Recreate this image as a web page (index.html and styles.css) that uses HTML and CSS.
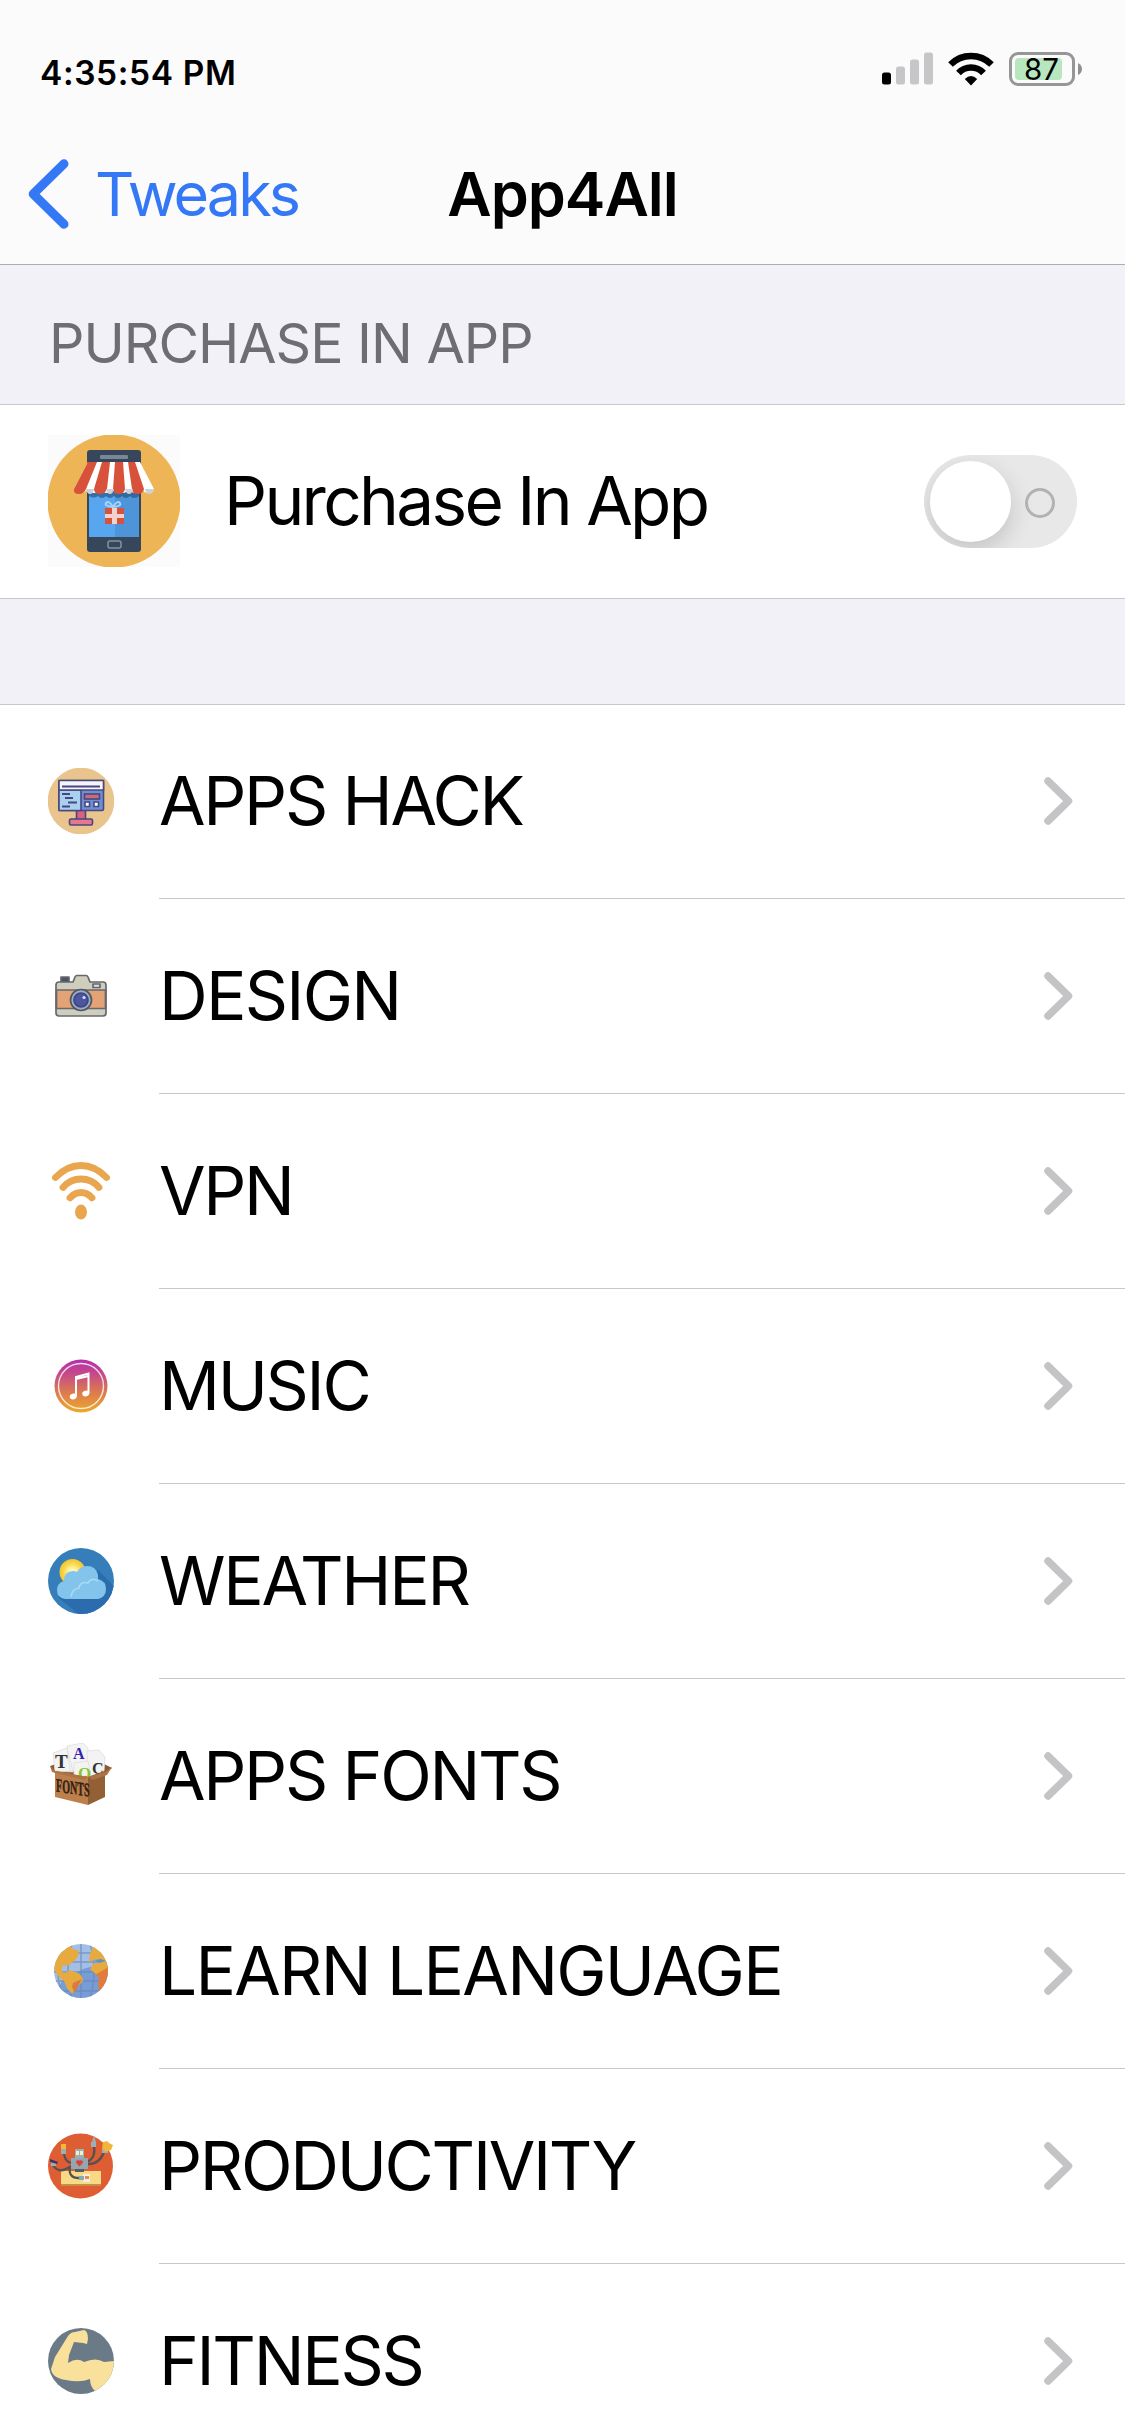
FILE: index.html
```
<!DOCTYPE html>
<html lang="en">
<head>
<meta charset="utf-8">
<title>App4All</title>
<link rel="stylesheet" href="styles.css">
</head>
<body>
<svg class="defs" width="0" height="0" aria-hidden="true">
  <defs>
    <symbol id="chevron" viewBox="0 0 30 48"><path d="M4 4 24.500 24 4 44" fill="none" stroke="#c4c4c6" stroke-width="7.500" stroke-linecap="round" stroke-linejoin="round"/></symbol>
    <linearGradient id="musicFill" x1="0" y1="0" x2="0" y2="1"><stop offset="0" stop-color="#b52fae"/><stop offset=".25" stop-color="#c4478c"/><stop offset=".6" stop-color="#db7852"/><stop offset="1" stop-color="#eca928"/></linearGradient>
    <radialGradient id="sunFill"><stop offset="0" stop-color="#fffbe0"/><stop offset=".35" stop-color="#fdf09a"/><stop offset=".65" stop-color="#f9d94d"/><stop offset="1" stop-color="#f5c22f"/></radialGradient>
    <clipPath id="globeClip"><circle cx="33" cy="33" r="27"/></clipPath>
    <clipPath id="discClip"><circle cx="33" cy="33" r="33"/></clipPath>
  </defs>
</svg>

<div class="screen">
  <header class="top">
    <div class="status">
      <span class="time">4:35:54 PM</span>
      <span class="indicators">
        <svg class="signal" viewBox="0 0 51 33"><rect y="20.500" width="9" height="12" rx="2.500"/><g fill="#c6c6c8"><rect x="14" y="14.500" width="9" height="18" rx="2.500"/><rect x="28" y="7.500" width="9" height="25" rx="2.500"/><rect x="42" y=".5" width="9" height="32" rx="2.500"/></g></svg>
        <svg class="wifi" viewBox="0 0 46 34"><g fill="none" stroke="#000" stroke-width="6.500"><path d="M2.500 12.500Q11 4 23 4t20.500 8.500"/><path d="M10.500 21Q15.500 15.500 23 15.500T35.500 21"/></g><path d="M16.800 27Q23 21 29.200 27L23 33.500Z"/></svg>
        <span class="battery"><span class="battery-body"><span class="battery-fill">87</span></span><svg class="battery-cap" viewBox="0 0 4 12"><path d="M0 0Q4 2 4 6T0 12Z" fill="#909090"/></svg></span>
      </span>
    </div>
    <nav class="navbar">
      <a class="back"><svg viewBox="0 0 41 70"><path d="M36 4.800 5.200 35 36 65.200" fill="none" stroke="#3478f6" stroke-width="9" stroke-linecap="round" stroke-linejoin="round"/></svg><span>Tweaks</span></a>
      <h1>App4All</h1>
      <span></span>
    </nav>
  </header>

  <h2 class="section-title">PURCHASE IN APP</h2>
  <section class="group">
    <div class="row purchase">
      <svg class="big-icon" viewBox="0 0 132 132">
        <rect width="132" height="132" fill="#fbfbfb"/><circle cx="66" cy="66" r="66.500" fill="#eeb556"/>
        <rect x="39" y="15" width="54" height="102" rx="3" fill="#36475c"/>
        <rect x="52" y="20" width="28" height="4" rx="1" fill="#7a8796"/>
        <path d="M41 54h50v48H41z" fill="#4d95d8"/><path d="M41 54h26v48H41z" fill="#58a6f0"/>
        <path d="M41 56h50v5q-5 4-9 0-4 4-8 0-4 4-8 0-4 4-8 0-4 4-8 0-4 3-9 0z" fill="#285786" opacity=".7"/>
        <path d="M40 27h52l14 27q-1 4-6 4-4 0-6-4-2 4-7 4-4 0-6-4-2 4-7 4-5 0-7-4-2 4-8 4-4 0-6-4-2 4-7 4-4 0-6-4-3 4-8 4-6 0-6-4z" fill="#fff"/>
        <g fill="#d8523b"><path d="M40 27h9L38 54q-2 5-7 5-6 0-5-5zM54 27h8l-3 27q-2 5-7 5-6 0-6-5zM67 27h8l2 27q-1 5-6 5-6 0-6-5zM80 27h7l9 27q-1 5-6 5-6 0-6-5z"/></g>
        <g fill="#ccd2d7"><path d="M38 54h8q-1 5-4 5-3 0-4-5zM58 54h8q-1 5-4 5-3 0-4-5zM77 54h8q-1 5-4 5-3 0-4-5zM97 54h9q-1 5-5 5-3 0-4-5z"/></g>
        <path d="M65 72q-4-7-7-4-2 3 7 4 9-1 7-4-3-3-7 4" fill="none" stroke="#a9d2f3" stroke-width="2"/>
        <path d="M57 73h19v16H57z" fill="#d5523f"/><path d="M64 73h5v16h-5zM57 79h19v4H57z" fill="#f3d2cd"/>
        <rect x="60" y="106" width="13" height="7" rx="2" fill="none" stroke="#8592a0" stroke-width="1.500"/>
      </svg>
      <span class="label mixed">Purchase In App</span>
      <span class="switch"><span class="knob"></span><span class="ring"></span></span>
    </div>
  </section>

  <section class="group list">
    <div class="row"><svg class="icon" viewBox="0 0 66 66"><circle cx="33" cy="33" r="33.300" fill="#e9c48d"/><g stroke="#48477e" stroke-width="1.600"><rect x="28.500" y="42" width="9" height="10" fill="#d9607e"/><rect x="21.500" y="51" width="23" height="6" rx="1.500" fill="#e4788e"/><rect x="11" y="12.500" width="44.500" height="30" rx="1.500" fill="#6e8fd6"/><path d="M11 22h22v20.500H11z" fill="#a9d0ef"/><path d="M11 12.500h44.500V22H11z" fill="#f4f6fb"/><path d="M14 18.500h38M14 26h8M17 30h8M20 34.500h9M14 38.500h8" fill="none" stroke-width="1.800"/><rect x="36.500" y="26" width="15" height="5" fill="#c66d7e"/><path d="M37 34h4.500v4.500H37zM46 34h4.500v4.500H46z" fill="#fff"/></g></svg><span class="label">APPS HACK</span><svg class="chevron"><use href="#chevron"/></svg></div>

    <div class="row"><svg class="icon" viewBox="0 0 66 66"><g stroke="#66686f" stroke-width="1.700" stroke-linejoin="round"><rect x="13" y="14" width="8" height="6" fill="#4d5464"/><path d="M11 19H25l2-5q.7-1.500 2-1.500h9q1.500 0 2 1.500l2 5h13q3 0 3 3v28q0 3-3 3H11q-3 0-3-3V22q0-3 3-3z" fill="#cfcdbc"/><path d="M8.500 27h49v18.500h-49z" fill="#e4a374"/><rect x="45" y="21" width="7" height="3.500" fill="#d8dfe8"/><circle cx="33" cy="37" r="10.500" fill="#9eabc7" stroke="#505765"/><circle cx="33" cy="37" r="7" fill="#4b55a4" stroke="#3e4779"/></g><circle cx="36" cy="34.500" r="1.600" fill="#d7def2"/></svg><span class="label wide">DESIGN</span><svg class="chevron"><use href="#chevron"/></svg></div>

    <div class="row"><svg class="icon" viewBox="0 0 66 66"><g fill="none" stroke="#e9a64f" stroke-width="6.800" stroke-linecap="round"><path d="M7.500 19.500Q19 7.500 33 7.500t25.500 12"/><path d="M15 29.500Q22 21 33 21t18 8.500"/><path d="M22 39.800Q27 34.500 33 34.500t11 5.300"/></g><ellipse cx="33" cy="54" rx="6" ry="7.500" fill="#e9a64f"/></svg><span class="label">VPN</span><svg class="chevron"><use href="#chevron"/></svg></div>

    <div class="row"><svg class="icon" viewBox="0 0 66 66"><circle cx="33" cy="33" r="26.500" fill="url(#musicFill)"/><circle cx="33" cy="33" r="22.500" fill="none" stroke="#fff" stroke-opacity=".8" stroke-width="1.400"/><path d="M28 43V24l12.500-3.500V40M28 26l12.500-3" fill="none" stroke="#fff" stroke-width="2"/><ellipse cx="25.300" cy="43.500" rx="3.600" ry="2.800" transform="rotate(-20 25.300 43.500)" fill="#fff"/><ellipse cx="37.800" cy="40.500" rx="3.600" ry="2.800" transform="rotate(-20 37.800 40.500)" fill="#fff"/></svg><span class="label">MUSIC</span><svg class="chevron"><use href="#chevron"/></svg></div>

    <div class="row"><svg class="icon" viewBox="0 0 66 66"><g clip-path="url(#discClip)"><path d="M0 0h66v66H0z" fill="#357eb9"/><path d="M50 22 66 38v28H30L10 49z" fill="#2b6caf"/></g><circle cx="24.500" cy="24" r="13" fill="url(#sunFill)"/><path d="M17 51q-8-1-8-9 0-7 7-9 0-10 9-10 2 0 4 1 3-6 10-6 9 0 11 9v4q8 2 8 10t-8 10z" fill="#82c4ec"/><path d="M23 49q1-8 8-9 1-7 9-5 3-6 10-2" fill="none" stroke="#aad9f3" stroke-width="1.600"/></svg><span class="label">WEATHER</span><svg class="chevron"><use href="#chevron"/></svg></div>

    <div class="row"><svg class="icon" viewBox="0 0 66 66"><path d="M2 23 14 19l38 0 12 6-8 6-16 4-33-5z" fill="#8b5a31"/><g fill="#f3f3f3" stroke="#dedede" stroke-width=".8"><path d="m5 10 14-5 6 24-18-1zM19 3l16-3 5 5 1 24-19-1z"/><path d="m39 8 12-1 6 7-1 14-16 6z"/><path d="m26 20 14-2 3 15H26z"/></g><g font-family="Liberation Serif, serif" font-weight="700"><text x="7" y="25" font-size="19" fill="#333">T</text><text x="25" y="16" font-size="16" fill="#3523ad">A</text><text x="30" y="36" font-size="17" fill="#8ac62f">O</text><text x="44" y="31" font-size="16" fill="#333">C</text></g><path d="m7 28 33 6v28L7 54z" fill="#bd804c"/><path d="m40 34 17-6v26L40 62z" fill="#936036"/><path d="m2 23 5 5 33 6-4 3L4 29zM64 24l-7 5-17 5 5 3 14-5z" fill="#ad7343"/><text transform="matrix(.53 .08 0 1 8 48.500)" font-family="Liberation Serif, serif" font-weight="700" font-size="19" fill="#332215" stroke="#332215" stroke-width=".5">FONTS</text></svg><span class="label">APPS FONTS</span><svg class="chevron"><use href="#chevron"/></svg></div>

    <div class="row"><svg class="icon" viewBox="0 0 66 66"><g clip-path="url(#globeClip)"><path d="M6 6h54v54H6z" fill="#a3bfe6"/><path d="M6 60 14 43 35 31 60 24v36z" fill="#789dd6"/><path d="M6 15h54M6 24h54M6 34h54M6 43h54M6 53h54M33 6v54M24 6q-8 27 0 54M42 6q8 27 0 54M14 10q-8 23 0 46M52 10q8 23 0 46" fill="none" stroke="#6686b5" stroke-opacity=".65" stroke-width="1.500"/><path d="M7 26 10 16 22 7l3 4 6 2-1 6-5 5-4 3-7 1v6l4 1 3-3 9 3q5 3 5 8l-8 8-3 5-5-6-3-7-6-5-4-7z" fill="#e7aa3e"/><path d="m25 45 9-4-5 9-2 5-3-6z" fill="#de793d"/><path d="m45 9 5-1 12 16v10l-11 5-9-8 3-5 8-2-4-3-8 3 1-8z" fill="#e7aa3e"/><path d="m47 37 15-9v16L51 54l-1-8 1-7z" fill="#e17c3c"/><path d="m46 22 7-1 5 2-7 2z" fill="#6094bd"/></g></svg><span class="label wide">LEARN LEANGUAGE</span><svg class="chevron"><use href="#chevron"/></svg></div>

    <div class="row"><svg class="icon" viewBox="0 0 66 66"><circle cx="32.500" cy="33" r="32.500" fill="#de5d33"/><path d="M13 38h40v14H13z" fill="#f8d985"/><path d="M13 51h40v2H13z" fill="#c78e48"/><g fill="none" stroke="#575252" stroke-width="2.300"><path d="M23 30Q16 28 16 19M23 33Q11 42 5 32M39 29Q48 25 46 13M39 31Q51 32 56 19M22 34Q20 45 31 45"/></g><rect x="27" y="16" width="9" height="9" fill="#9bb0b5"/><path d="M28 18h3v4h-3zm4 0h3v4h-3z" fill="#f5eecb"/><path d="M23 25h17v11H23z" fill="#92a7af"/><path d="M27 36h9v3h-9z" fill="#535d63"/><path d="m31.500 33.500-3.500-4q0-3 3.500-2 3.500-1 3.500 2z" fill="#e13e36"/><path d="M13 11h5v6h-5z" fill="#f6b832"/><path d="M13 16h5v5h-5zM43 9h5v5h-5zM54 16h6v4h-6zM3 29h5v4H3z" fill="#9faeb5"/><path d="m2 26 8 3-1 2-7-2z" fill="#403460"/><path d="m44 9 2-7 2 7z" fill="#9faeb5"/><path d="m55 9 4-1 2 2 4 2-2 5-6 2-3-4z" fill="#f0b53b"/><path d="M35 41h7v8h-7z" fill="#f9ece2"/><path d="M31 43h5v4h-5z" fill="#80abc0"/><path d="M37 43h4v3h-4z" fill="#ee8b43"/></svg><span class="label">PRODUCTIVITY</span><svg class="chevron"><use href="#chevron"/></svg></div>

    <div class="row"><svg class="icon" viewBox="0 0 66 66"><g clip-path="url(#discClip)"><path d="M0 0h66v66H0z" fill="#6a7b87"/><path d="M3 41 7 29 20 8q3-4 7-4l9-2q4 1 4 9l-1 5-4-1-9-1-5 13-1 8q9-6 16-1 12-5 20 0l10-1v20L48 64q-6-5-6-13-10 4-24 1Q4 50 3 41z" fill="#f9e09b"/></g></svg><span class="label">FITNESS</span><svg class="chevron"><use href="#chevron"/></svg></div>
  </section>
</div>
</body>
</html>
```
FILE: styles.css
```
* { box-sizing: border-box; }
html, body { margin: 0; height: 100%; overflow: hidden; }
body { background: #fff; color: #000; font-family: Inter, "Liberation Sans", sans-serif; }
h1, h2 { margin: 0; font-weight: inherit; }
.defs { display: block; height: 0; }
.screen { width: 1125px; height: 2436px; overflow: hidden; background: #f2f1f7; }

.top { height: 265px; background: #fbfbfc; border-bottom: 1px solid #adadb1; display: flex; flex-direction: column; }
.status { height: 124px; padding: 34px 43px 0 40px; display: flex; justify-content: space-between; align-items: flex-start; }
.time { font-size: 33.500px; line-height: 40px; margin-top: 19px; font-weight: 600; letter-spacing: .600px; white-space: nowrap; }
.indicators { display: flex; align-items: flex-start; padding-top: 18px; }
.signal { width: 51px; height: 33px; margin-right: 15px; }
.wifi { width: 46px; height: 34px; margin-right: 15px; }
.battery { display: flex; align-items: center; gap: 3px; }
.battery-body { width: 66px; height: 34px; border: 3px solid #969696; border-radius: 9px; padding: 3px; display: flex; }
.battery-fill { width: 47px; height: 22px; border-radius: 4px; background: #b8e6bf; font-size: 29.500px; line-height: 23px; padding-left: 9px; letter-spacing: -.100px; }
.battery-cap { width: 4px; height: 12px; }

.navbar { flex: 1; display: grid; grid-template-columns: 1fr auto 1fr; align-items: start; padding: 35px 28px 0; }
.back { display: flex; align-items: center; color: #3478f6; height: 70px; }
.back svg { width: 41px; height: 70px; margin-right: 26px; }
.back span { font-size: 61px; letter-spacing: -2.900px; }
h1 { font-size: 61px; font-weight: 600; line-height: 70px; letter-spacing: -1px; }

.section-title { height: 139px; padding: 48px 49px 0; font-size: 55.500px; line-height: 60px; color: #6d6d72; letter-spacing: -1px; }
.group { background: #fff; border-top: 1px solid #c8c7cc; border-bottom: 1px solid #c8c7cc; }
.row { height: 195px; padding: 0 48px 1px; display: flex; align-items: center; position: relative; }
.purchase { height: 193px; }
.list { margin-top: 105px; }
.list .row:first-child { height: 194px; padding-bottom: 2px; }
.list .row + .row::before { content: ""; position: absolute; left: 159px; right: 0; top: -1px; height: 1px; background: #c8c7cc; }
.label { flex: 1; font-size: 67.500px; line-height: 80px; letter-spacing: -2.300px; white-space: nowrap; }
.label.wide { letter-spacing: -1.750px; }
.label.mixed { letter-spacing: -2.700px; }
.icon { width: 66px; height: 66px; margin-right: 45px; flex: none; }
.big-icon { width: 132px; height: 132px; margin-right: 44px; flex: none; }
.chevron { width: 30px; height: 48px; margin-right: 3px; flex: none; }

.switch { width: 153px; height: 93px; border-radius: 47px; background: #e8e8e9; padding: 6px 22px 6px 6px; display: flex; align-items: center; justify-content: space-between; overflow: hidden; }
.knob { width: 81px; height: 81px; border-radius: 50%; background: #fff; box-shadow: 0 9px 24px rgba(0, 0, 0, .16); }
.ring { width: 30px; height: 30px; margin-top: 3px; border: 3px solid #b2b2b2; border-radius: 50%; }
```
